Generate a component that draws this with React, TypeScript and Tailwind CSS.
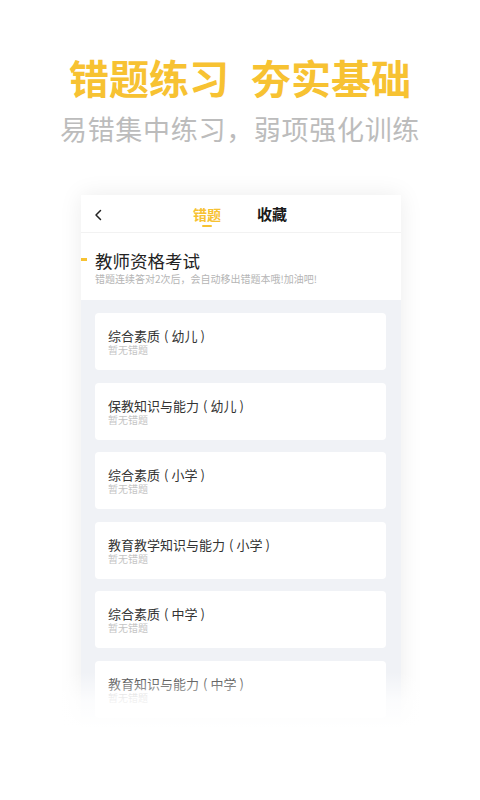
const subjects = [
  ['综合素质', '幼儿'],
  ['保教知识与能力', '幼儿'],
  ['综合素质', '小学'],
  ['教育教学知识与能力', '小学'],
  ['综合素质', '中学'],
  ['教育知识与能力', '中学'],
]

function App() {
  return (
    <div
      className="relative w-[480px] h-[800px] overflow-hidden bg-white flex flex-col items-center"
      style={{ fontFamily: '"Noto Sans CJK SC", "Noto Sans", sans-serif' }}
    >
      <h1 className="mt-[57px] flex gap-[22px] text-[40px] leading-[40px] font-bold text-[#f7c232]">
        <span>错题练习</span>
        <span>夯实基础</span>
      </h1>
      <p className="mt-[18px] text-[27px] leading-[27px] tracking-[0.7px] text-[#bcbcbc]">
        易错集中练习，弱项强化训练
      </p>

      <div className="mt-[53px] ml-[2px] w-[320px] h-[560px] bg-[#f0f2f6] shadow-[0_0_22px_rgba(0,0,0,0.08)] overflow-hidden">
        <div className="bg-white">
          <div className="relative h-[38px] flex items-center justify-center border-b border-[#f2f2f2]">
            <svg className="absolute left-[13px] top-[14px] w-[9px] h-[12px]" viewBox="0 0 9 12" fill="none">
              <path d="M6.5 1.5L2 6l4.5 4.5" stroke="#222" strokeWidth="1.5" strokeLinecap="round" strokeLinejoin="round" />
            </svg>
            <div className="flex gap-[36px] mr-[2px] mt-[4px]">
              <div className="flex flex-col items-center">
                <span className="text-[14px] leading-[18px] font-bold text-[#f7c232]">错题</span>
                <span className="mt-[2px] w-[10px] h-[2px] rounded-full bg-[#f7c232]" />
              </div>
              <span className="text-[15px] leading-[18px] font-bold text-[#1a1a1a]">收藏</span>
            </div>
          </div>
          <div className="relative h-[67px] pl-[14px] pt-[17px]">
            <span className="absolute left-0 top-[25px] w-[6px] h-[3px] bg-[#f7c232]" />
            <div className="text-[17.5px] leading-[22px] text-[#222]">教师资格考试</div>
            <div className="text-[10px] leading-[14px] text-[#b5b5b5]">
              错题连续答对2次后，会自动移出错题本哦!加油吧!
            </div>
          </div>
        </div>

        <div className="px-[14px] pt-[13px] flex flex-col gap-[12.6px]">
          {subjects.map(([name, level]) => (
            <div key={name + level} className="h-[57px] w-[291px] bg-white rounded-[4px] pl-[13px] pt-[15px]">
              <div className="flex items-center text-[13px] leading-[15px] text-[#333]">
                <span>{name}</span>
                <span className="ml-[4px] mr-[3px]">(</span>
                <span>{level}</span>
                <span className="ml-[3px]">)</span>
              </div>
              <div className="mt-[1px] text-[10px] leading-[12px] text-[#c4c4c4]">暂无错题</div>
            </div>
          ))}
        </div>
      </div>

      <div className="absolute left-0 right-0 top-[672px] h-[56px] bg-gradient-to-b from-white/0 via-white/75 to-white" />
      <div className="absolute left-0 right-0 top-[728px] bottom-0 bg-white" />
    </div>
  )
}

export default App
